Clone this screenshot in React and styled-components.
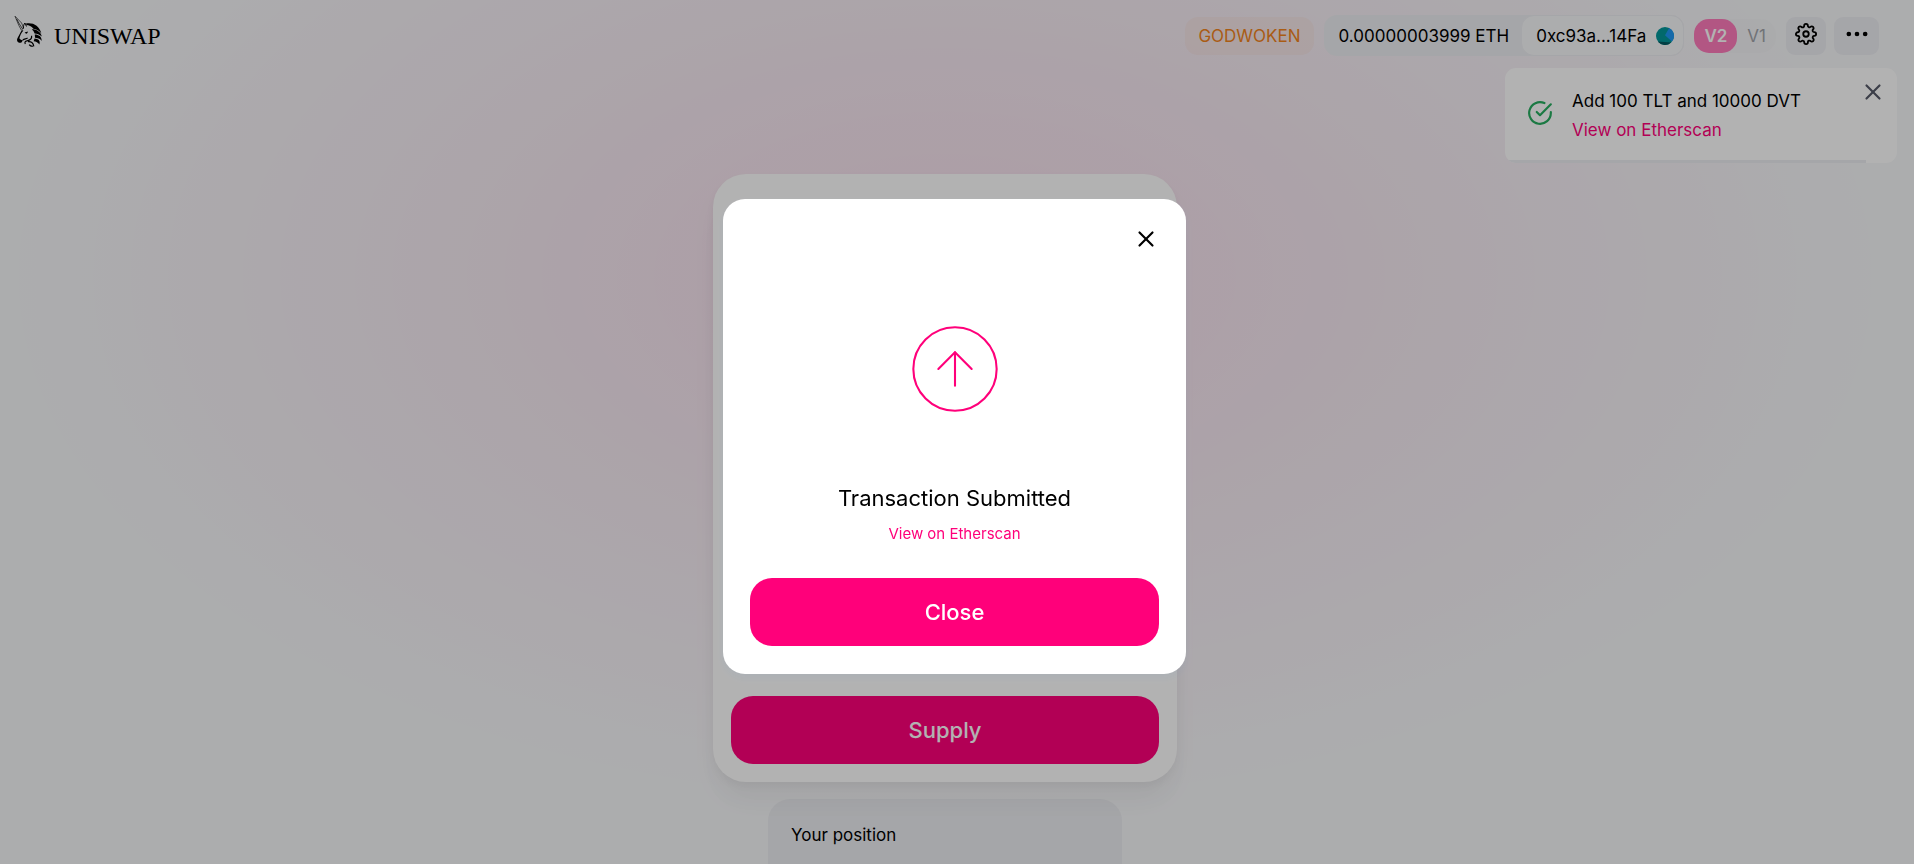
import React, { useState } from 'react'
import styled, { createGlobalStyle } from 'styled-components'
import { FiArrowUpCircle, FiCheckCircle, FiMoreHorizontal, FiSettings, FiX } from 'react-icons/fi'

function UnicornLogo() {
    return (
        <svg width="30" height="40" viewBox="0 0 30 40" aria-hidden="true">
            <path d="M1 .2 L7.6 7 L9.6 12 L7.4 14.2 L4.8 9.4 Z" fill="none" stroke="#000" strokeWidth=".6" />
            <path d="M2.6 3 L5.4 8 L8.6 13" fill="none" stroke="#000" strokeWidth=".7" />
            <path d="M9.4 12.6 C9.2 10 9.8 8.4 11 7 C11.4 8.8 12 9.8 13 10.6" fill="none" stroke="#000" strokeWidth="1" />
            <path d="M8 14.2 C6.6 15.8 5.6 18.2 4.2 20.8 C3.2 22.4 2.8 23.8 3.2 25 C3.8 26.8 6 27.2 7.4 26.4 C8.2 25.8 8.4 24.8 8.8 24 C7.4 24.2 6 23.4 5.4 22.2 C6 19.8 7 17 9.4 14.4 Z" />
            <path d="M10.6 16.4 L13.8 15.4 C13.8 16.8 13 17.8 11.8 17.6 Z" />
            <path d="M12 7.6 C19 6.4 25.2 9.4 27.4 17.6 C24.6 14 21.6 13.2 19.4 12.8 C17.4 10.2 15 9 12.4 9 Z" />
            <path d="M17.8 13.2 C22.6 13.2 27 15.8 27.8 20.6 C25.6 18 23 17.8 20.6 17.4 C20 15.6 19 14.4 17.8 13.2 Z" />
            <path d="M20.8 18.4 C24.6 18.4 28 20.4 27.6 25 C26 22.2 23.6 22 21 21.8 Z" />
            <path d="M20.6 22.6 C24 22.8 26.8 24.6 25.4 28.6 C24.2 26.2 22 25.6 19.6 25.2 Z" />
            <path d="M8.8 24 C10.4 22.8 12 23 13.6 22 M17.6 19.8 C18 23 16 24.4 13 24.8 C11 25.2 10.4 26.6 11.4 28 M14 25.6 C17 25.2 19.4 26.6 19.8 30.4 M15.2 28.6 C16 30 17.4 30.4 18.8 30.4" fill="none" stroke="#000" strokeWidth="1.2" />
        </svg>
    )
}

function Avatar() {
    return (
        <AvatarSvg viewBox="0 0 18 18" aria-hidden="true">
            <circle cx="9" cy="9" r="9" fill="#03979a" />
            <path d="M13.2 1 A9 9 0 0 1 16 14.6 L9 8.2 Z" fill="#1f97f4" />
            <path d="M1.8 14.4 L15.2 15.4 A9 9 0 0 1 1.8 14.4 Z" fill="#045a60" />
        </AvatarSvg>
    )
}

function App() {
    const [showModal, setShowModal] = useState(true)
    const [showPopup, setShowPopup] = useState(true)

    return (
        <>
            <GlobalStyle />
            <Page>
                <Header>
                    <Brand href="#">
                        <UnicornLogo />
                        <span>UNISWAP</span>
                    </Brand>
                    <Controls>
                        <NetworkCard>GODWOKEN</NetworkCard>
                        <Account>
                            <Balance>0.00000003999 ETH</Balance>
                            <AddressButton>
                                0xc93a...14Fa
                                <Avatar />
                            </AddressButton>
                        </Account>
                        <VersionSwitch>
                            <VersionButton $active>V2</VersionButton>
                            <VersionButton>V1</VersionButton>
                        </VersionSwitch>
                        <MenuButtons>
                            <IconButton aria-label="Settings">
                                <FiSettings size={22} />
                            </IconButton>
                            <IconButton $wide aria-label="More">
                                <FiMoreHorizontal size={28} />
                            </IconButton>
                        </MenuButtons>
                    </Controls>
                </Header>
                <Main>
                    <LiquidityCard>
                        <PrimaryButton onClick={() => setShowModal(true)}>Supply</PrimaryButton>
                    </LiquidityCard>
                    <PositionCard>Your position</PositionCard>
                </Main>
            </Page>
            {showPopup && (
                <Popup>
                    <PopupIcon>
                        <FiCheckCircle size={26} />
                    </PopupIcon>
                    <PopupText>
                        <span>Add 100 TLT and 10000 DVT</span>
                        <ExternalLink href="#">View on Etherscan</ExternalLink>
                    </PopupText>
                    <PopupClose aria-label="Dismiss" onClick={() => setShowPopup(false)}>
                        <FiX size={26} />
                    </PopupClose>
                    <PopupTimer />
                </Popup>
            )}
            {showModal && (
                <Overlay>
                    <Modal role="dialog" aria-modal="true" aria-label="Transaction Submitted">
                        <ModalHeader>
                            <CloseButton aria-label="Close dialog" onClick={() => setShowModal(false)}>
                                <FiX size={26} />
                            </CloseButton>
                        </ModalHeader>
                        <ConfirmedIcon>
                            <FiArrowUpCircle size={100} strokeWidth={0.5} />
                        </ConfirmedIcon>
                        <ModalTitle>Transaction Submitted</ModalTitle>
                        <ExternalLink $small href="#">View on Etherscan</ExternalLink>
                        <ModalFooter>
                            <PrimaryButton onClick={() => setShowModal(false)}>Close</PrimaryButton>
                        </ModalFooter>
                    </Modal>
                </Overlay>
            )}
        </>
    )
}

export default App


const GlobalStyle = createGlobalStyle`
    *{
        box-sizing: border-box;
    }
    html{
        background-color: #f7f8fa;
        overflow: hidden;
    }
    body{
        margin: 0;
        color: #000;
        font-family: Inter, sans-serif;
        font-size: 17px;
        line-height: 22px;
    }
    button{
        border: none;
        padding: 0;
        color: inherit;
        font: inherit;
        background: none;
        cursor: pointer;
    }
    a{
        text-decoration: none;
    }
    svg{
        display: block;
    }
`

const Page = styled.div`
    min-height: 124vh;
    margin-right: 24px;
    background-image: radial-gradient(50% 50% at 50% 50%, rgba(255, 0, 122, 0.1) 0%, rgba(255, 255, 255, 0) 100%);
    background-position: 0 -30vh;
    background-repeat: no-repeat;
`

const Header = styled.header`
    display: flex;
    align-items: center;
    justify-content: space-between;
    padding: 15px 11px 15px 14px;
`

const Brand = styled.a`
    display: flex;
    align-items: center;
    gap: 10px;
    color: #000;
    font-family: 'Liberation Serif', serif;
    font-size: 24px;
`

const Controls = styled.div`
    display: flex;
    align-items: center;
    gap: 10px;
`

const NetworkCard = styled.div`
    padding: 8px 13px;
    border-radius: 13px;
    color: #f3841e;
    background-color: rgba(243, 132, 30, 0.05);
`

const Account = styled.div`
    display: flex;
    align-items: center;
    border-radius: 13px;
    background-color: #edeef2;
`

const Balance = styled.span`
    padding: 0 12px 0 15px;
`

const AddressButton = styled.button`
    display: flex;
    align-items: center;
    gap: 10px;
    height: 41px;
    padding: 0 9px 0 14px;
    border: 1px solid #edeef2;
    border-radius: 13px;
    background-color: #f7f8fa;
`

const AvatarSvg = styled.svg`
    width: 18px;
    height: 18px;
`

const VersionSwitch = styled.div`
    display: flex;
    border-radius: 15px;
    background-color: rgba(237, 238, 242, 0.3);
`

const VersionButton = styled.button`
    height: 34px;
    padding: 0 10px;
    border-radius: 15px;
    color: ${props=>props.$active ? '#fff' : '#a2a4ab'};
    font-weight: ${props=>props.$active ? 600 : 400};
    background-color: ${props=>props.$active ? '#ff7bbc' : 'transparent'};
`

const MenuButtons = styled.div`
    display: flex;
    gap: 8px;
`

const IconButton = styled.button`
    display: flex;
    align-items: center;
    justify-content: center;
    width: ${props=>props.$wide ? '45px' : '40px'};
    height: 38px;
    padding-bottom: 4px;
    border-radius: 9px;
    background-color: #edeef2;
`

const Main = styled.main`
    display: flex;
    flex-direction: column;
    align-items: center;
    padding: 103px 16px 0;
`

const LiquidityCard = styled.section`
    position: relative;
    z-index: 1;
    display: flex;
    flex-direction: column;
    justify-content: flex-end;
    width: 100%;
    max-width: 464px;
    min-height: 608px;
    padding: 18px;
    border-radius: 33px;
    background-color: #fff;
    box-shadow: 0 0 1px rgba(0, 0, 0, 0.01), 0 4px 9px rgba(0, 0, 0, 0.04), 0 18px 26px rgba(0, 0, 0, 0.04), 0 26px 35px rgba(0, 0, 0, 0.01);
`

const PrimaryButton = styled.button`
    width: 100%;
    height: 68px;
    border-radius: 22px;
    color: #fff;
    font-size: 22px;
    font-weight: 500;
    background-color: #ff007a;
`

const PositionCard = styled.section`
    width: 100%;
    max-width: 354px;
    min-height: 200px;
    margin-top: 17px;
    padding: 25px 23px;
    border-radius: 22px;
    background-color: #edeef2;
`

const ExternalLink = styled.a`
    color: #ff007a;
    font-size: ${props=>props.$small ? '15px' : '17px'};
`

const Popup = styled.aside`
    position: fixed;
    top: 68px;
    right: 17px;
    display: flex;
    align-items: center;
    gap: 19px;
    width: 392px;
    padding: 22px;
    border-radius: 11px;
    background-color: #fff;
    overflow: hidden;
`

const PopupIcon = styled.div`
    padding-bottom: 6px;
    color: #27ae60;
`

const PopupText = styled.div`
    display: flex;
    flex-direction: column;
    gap: 7px;
`

const PopupClose = styled.button`
    position: absolute;
    top: 11px;
    right: 11px;
    color: #565a69;
`

const PopupTimer = styled.div`
    position: absolute;
    left: 0;
    bottom: 0;
    width: 92%;
    height: 3px;
    background-color: #edeef2;
`

const Overlay = styled.div`
    position: fixed;
    inset: 0;
    z-index: 2;
    display: flex;
    align-items: flex-start;
    justify-content: center;
    padding: 23vh 5px 0 0;
    background-color: rgba(0, 0, 0, 0.3);
`

const Modal = styled.div`
    display: flex;
    flex-direction: column;
    align-items: center;
    width: 100%;
    max-width: 463px;
    padding: 27px 27px 28px;
    border-radius: 22px;
    background-color: #fff;
    box-shadow: 0 4px 9px rgba(47, 128, 237, 0.05);
`

const ModalHeader = styled.div`
    display: flex;
    justify-content: flex-end;
    width: 100%;
`

const CloseButton = styled.button`
    color: #000;
`

const ConfirmedIcon = styled.div`
    padding: 67px 0 66px;
    color: #ff007a;
`

const ModalTitle = styled.h2`
    margin: 0 0 12px;
    font-size: 22px;
    font-weight: 400;
    line-height: 26px;
`

const ModalFooter = styled.div`
    width: 100%;
    padding-top: 33px;
`
